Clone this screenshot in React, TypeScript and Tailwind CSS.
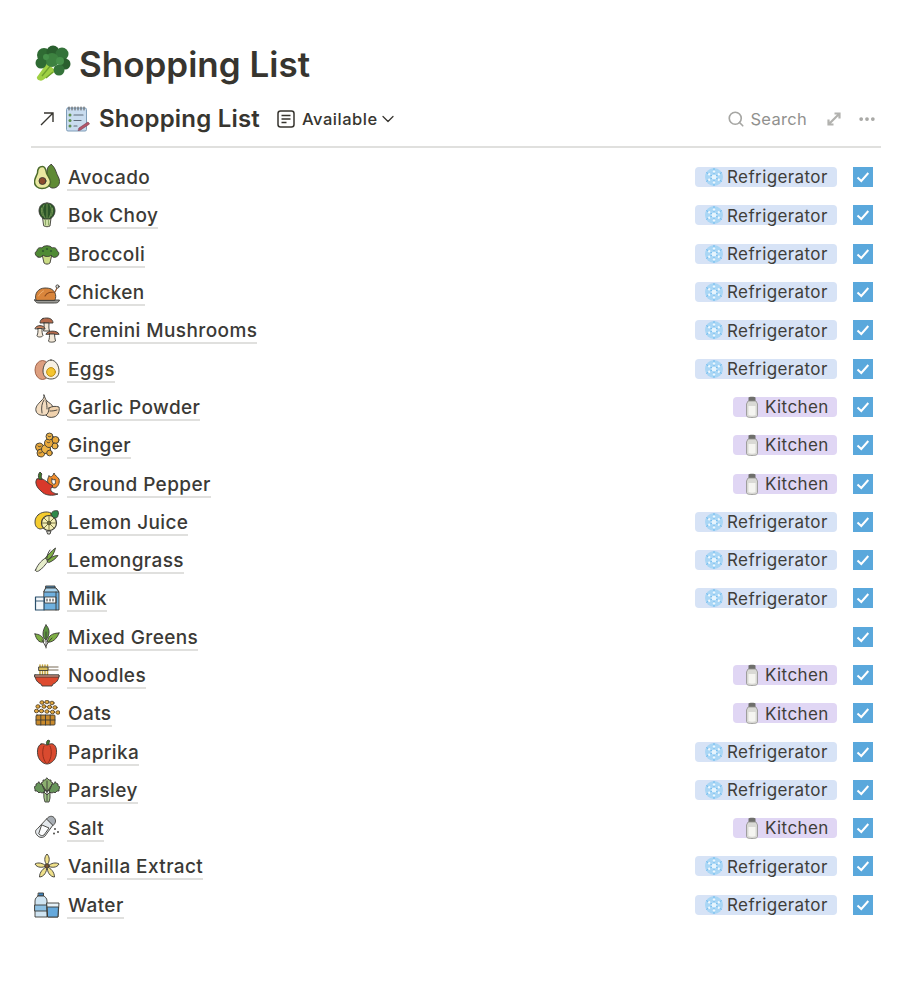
import type { ReactNode } from "react"
import { ChevronDown, Search, MoreHorizontal } from "lucide-react"

const ink = "#3b3a36"

function Ico({ children, size = 26 }: { children: ReactNode; size?: number }) {
  return (
    <svg
      width={size}
      height={size}
      viewBox="0 0 26 26"
      fill="none"
      stroke={ink}
      strokeWidth="0.9"
      strokeLinejoin="round"
      strokeLinecap="round"
      className="shrink-0"
    >
      {children}
    </svg>
  )
}

const Avocado = () => (
  <Ico>
    <path d="M17 0.500c-2 1-4 3-4 7 0 5 0 16 5 16.500 4 .5 7.500-2 7.500-6.500 0-4-2.500-6-3.500-10-1-3-3-6-5-7.500z" fill="#5f8a35" />
    <path d="M8.500 2.500c-3.500 0-5 3-5 6.500-1 3-3 5.500-3 9 0 4 3.500 6.500 7.500 6.500 4.500 0 8.500-2.500 8.500-6.500 0-3.500-3-6-4-9-.5-3-1.500-6.500-4-6.500z" fill="#e9e8a0" stroke="#4c6b2c" strokeWidth="1.500" />
    <circle cx="8.500" cy="17" r="3.500" fill="#8a4b2d" />
  </Ico>
)
const BokChoy = () => (
  <Ico>
    <path d="M9 16h8l-1 8c-2 1-4 1-6 0z" fill="#cfe0a8" />
    <path d="M13 1c5 0 8 3 8 8 0 4-3 7-5 8h-6c-2-1-5-4-5-8 0-5 3-8 8-8z" fill="#2b5528" />
    <path d="M13 2v14M10 3c-2 3-2 8 1 13M16 3c2 3 2 8-1 13M7.500 6c-.5 3 0 6 1.500 8M18.500 6c.5 3 0 6-1.500 8" stroke="#8fb066" strokeWidth=".7" />
    <path d="M11.500 18v5M14.500 18v5" stroke="#6f8f4a" strokeWidth=".7" />
  </Ico>
)
const BroccoliSmall = () => (
  <Ico>
    <path d="M8 13l2 9c2 1.500 4 1.500 6 0l2-9z" fill="#cbdc85" />
    <path d="M4 16c-3-1-4-5-1-6 0-3 3-4 5-3 1-3 9-3 10 0 2-1 5 0 5 3 3 1 2 5-1 6-2 1-4 0-5-2-1 2-6 2-8 0-1 2-3 3-5 2z" fill="#4f8a34" />
    <circle cx="9" cy="10" r="1.100" fill="#2f5a2c" stroke="none" />
    <circle cx="17" cy="10" r="1.100" fill="#2f5a2c" stroke="none" />
    <circle cx="13" cy="8" r="1.100" fill="#2f5a2c" stroke="none" />
  </Ico>
)
const Chicken = () => (
  <Ico>
    <path d="M0.500 21h25c-1 3-3 3-5 3H6c-3 0-4 0-5.500-3z" fill="#9a9a96" />
    <path d="M2 21c-2-6 2-12 9-12 5 0 8 1 10 5 1 2 1 5 0 7z" fill="#d9853b" />
    <path d="M11 17c2-4 6-4 10-4l2-4" stroke="#8a4a1e" strokeWidth="1.100" fill="none" />
    <circle cx="23.500" cy="7.500" r="1.600" fill="#d8d8d4" />
    <path d="M4.500 17c1-2 3-4 5-5" stroke="#f2b87a" fill="none" />
  </Ico>
)
const Mushrooms = () => (
  <Ico>
    <path d="M9 1.500c5-1.500 10 0 10 4.500H6c0-2 1-4 3-4.500z" fill="#b5694a" />
    <path d="M10 6h5c0 3-.5 5 .5 8h-6c1-3 .5-5 .5-8z" fill="#f3e8d8" />
    <path d="M1 11.500c1-4 9-4 10 0z" fill="#c67f5b" />
    <path d="M4 11.500h4c0 3 0 5 1 7-1 2-6 2-6 0 1-2 1-4 1-7z" fill="#f3e8d8" />
    <path d="M12 17c1-4 12-4 13 0z" fill="#b5694a" />
    <path d="M15.500 17h5c0 2 .5 5 1 7-1 1.500-7 1.500-7 0 1-2 1-5 1-7z" fill="#f3e8d8" />
  </Ico>
)
const Eggs = () => (
  <Ico>
    <ellipse cx="8.500" cy="14" rx="7.500" ry="9.500" fill="#dd9f7f" stroke="#96583e" />
    <path d="M17 4c5 0 8 6 8 11s-3 8-8 8-8-3-8-8 3-11 8-11z" fill="#f7f1e3" />
    <circle cx="17" cy="16" r="4.400" fill="#f5c52f" stroke="#b8860b" />
  </Ico>
)
const Garlic = () => (
  <Ico>
    <path d="M10 1c.5 3-1 4-3 6-3 3-6 6-5 10 1 4 6 5 10 4 5-1 8-4 7-8-1-3-4-4-6-6-2-2-2-4-3-6z" fill="#f3dcc0" />
    <path d="M15 14c3-2 7-2 10-1 1 4-1 9-5 10-4 1-7 0-8-2 2-1 3-4 3-7z" fill="#f0d2ae" />
    <path d="M10 6c-2 3-3 7-2 13M12 7c1 3 1 6 1 8M16 17c2 0 4 0 7-1" />
  </Ico>
)
const Ginger = () => (
  <Ico>
    <circle cx="5.500" cy="15" r="4" fill="#e9a83a" />
    <circle cx="7" cy="21" r="4" fill="#e9a83a" />
    <circle cx="12" cy="17" r="4.500" fill="#eeb347" />
    <circle cx="15" cy="11" r="4.500" fill="#e9a83a" />
    <circle cx="15.500" cy="4.500" r="3.500" fill="#eeb347" />
    <circle cx="21.500" cy="8" r="3.500" fill="#e9a83a" />
    <circle cx="21" cy="14" r="3" fill="#eeb347" />
    <circle cx="15.500" cy="21" r="2.800" fill="#e9a83a" />
    <path d="M4 14c1 1 2 1 3 0M5 21c1 0 2 0 3-1M13 10c1 1 2 1 3 0M14 4c1 1 2 1 3 0" />
  </Ico>
)
const Pepper = () => (
  <Ico>
    <path d="M15 5c2 2 4 0 5-3 1 3 3 3 5 6 1 4-1 8-4 9-3 0-6-2-7-5-1-3 0-5 1-7z" fill="#ef8c2c" />
    <path d="M18 8c1 1 2 1 3 0 0 2 1 3 0 5-2 1-4-1-3-5z" fill="#fff" />
    <path d="M3 8c3-1 7 0 10 3 2 2 5 3 6 4-1 1-3 2-2 5 1 1 4 3 7 3-5 2-13 2-17-3C3 17 0 11 3 8z" fill="#d9392b" />
    <path d="M5 8C4 6 4 3 6 1l2 2c-1 1-1 3 0 5z" fill="#3f7a2c" />
  </Ico>
)
const Lemon = () => (
  <Ico>
    <path d="M4 6c3-3 9-4 13-2 2 2 1 6-2 10-3 3-6 6-9 6-4-1-5-4-5-7 0-3 1-5 3-7z" fill="#f5cc2e" />
    <circle cx="15" cy="14" r="7.500" fill="#f4eeb5" stroke="#3b3a36" strokeWidth="1.200" />
    <circle cx="15" cy="14" r="1.800" fill="#8d8a45" />
    <path d="M15 7v14M8 14h14M10 9l10 10M20 9L10 19" stroke="#6d6a35" />
    <path d="M17 5c1-3 4-4 7-3 0 1 1 3 0 4 0 2-1 3-3 3-2 0-3-2-4-4z" fill="#2f8a4a" />
    <path d="M13 22h4l-1 3h-2z" fill="#d7d7cf" />
  </Ico>
)
const Lemongrass = () => (
  <Ico>
    <path d="M1.500 23c3-7 7-10 10-12l3 3c-3 3-6 8-10 10-2 1-3.500 0-3 -1z" fill="#e7eecb" />
    <path d="M11.500 11c2-3 6-7 10-10-1 4-3 9-7 12zM13 13.500c3-3 7-5 11-5-2 3-6 6-9 7z" fill="#7eae45" />
    <path d="M13 11c0-3 1-5 3-8" fill="none" />
  </Ico>
)
const Milk = () => (
  <Ico>
    <path d="M10 7l2-4h10l3 4v18H10z" fill="#6fb0de" />
    <path d="M12 1h9v2h-9z" fill="#4f8fc0" />
    <path d="M12 3h10l3 4H10z" fill="#a9d4ef" />
    <rect x="11" y="12" width="11" height="6" fill="#fff" />
    <path d="M13 14v2M16 14v2M19 14v2" strokeWidth="1.100" />
    <path d="M22 7v18" />
    <path d="M1.500 12h8.500v13H1.500z" fill="#f3f7fa" stroke="#2a4f6b" strokeWidth="1.200" />
    <path d="M1.500 16h8.500" stroke="#2a4f6b" />
  </Ico>
)
const Greens = () => (
  <Ico>
    <path d="M12 1c3 3 4 7 2 12-1 2-2 3-2 3-2-1-3-3-3-6 0-3 1-6 3-9z" fill="#5d9440" />
    <path d="M1 10c4 0 8 2 9 7 0 .5 0 1-1 1-4 1-7-3-8-8z" fill="#7eae45" />
    <path d="M25 9c-4 0-9 1-11 6l-1 3c5 1 10-3 12-9z" fill="#7eae45" />
    <path d="M12 24c0-7 0-11 0-16M12 23c-1-2-3-5-4-7M12 22c1-2 3-5 6-8" />
  </Ico>
)
const Noodles = () => (
  <Ico>
    <path d="M6 3v11M8.500 3v11M11 3v11M13.500 3v11" stroke="#c0a03a" strokeWidth="1.500" />
    <path d="M13 5h11M13 8h11" stroke="#a59c8e" strokeWidth="1.400" />
    <path d="M5 5h9v3.500H5z" fill="#d8bc5a" />
    <path d="M1 13h24c0 5-3 8-6 9l-1 2H8l-1-2c-3-1-6-4-6-9z" fill="#dd4a2f" />
    <path d="M1 13h24v2H1z" fill="#f4a48e" />
  </Ico>
)
const Oats = () => (
  <Ico>
    {[[8, 2.500], [13, 2], [18, 3], [4, 6.500], [10, 6.500], [15.500, 7], [21, 7.500], [2.500, 11], [7.500, 11], [13, 11.500], [18.500, 12], [24, 12.500]].map(([x, y]) => (
      <ellipse key={`${x}-${y}`} cx={x} cy={y} rx="2.100" ry="1.800" fill="#e4a93f" stroke="#4a3a20" strokeWidth=".8" />
    ))}
    <rect x="2" y="15" width="19" height="10" rx="1" fill="#c98a2c" />
    <path d="M6.800 15v10M11.500 15v10M16.200 15v10M2 20h19" />
  </Ico>
)
const Paprika = () => (
  <Ico>
    <path d="M13 6c-1-2-1-3 1-5l2 1c-1 1-1 2-1 4z" fill="#3f7a2c" />
    <path d="M7 5c3-1 4 1 6 1s3-2 6-1c4 2 4 8 3 12-1 4-5 8-9 8s-8-4-9-8C3 13 3 7 7 5z" fill="#d94a2f" />
    <path d="M10 7c-2 4-2 12 2 17M16 7c2 4 2 12-2 17" stroke="#8e2a18" />
  </Ico>
)
const Parsley = () => (
  <Ico>
    <path d="M13 1l2 2 2 0 0 2 2 1-1 2 1 2-2 1-1 2-3 1-3-1-1-2-2-1 1-2-1-2 2-1 0-2 2 0z" fill="#8cb070" />
    <path d="M5 5l1 2 2 0 1 3 1 2 1 3-3 1-2-1-1 1-2-2-2 0 0-2-1-2 2-1 0-2 2-1z" fill="#67955a" />
    <path d="M21 5l-1 2-2 0-1 3-1 2-1 3 3 1 2-1 1 1 2-2 2 0 0-2 1-2-2-1 0-2-2-1z" fill="#67955a" />
    <path d="M10 15l3 3 3-3v6l-1 4h-4l-1-4z" fill="#a4c78a" />
    <path d="M13 4v20M9 9l4 6M17 9l-4 6" />
  </Ico>
)
const Salt = () => (
  <Ico>
    <path d="M13 4l6 6-8 11c-2 2-6 2-8-1-2-2-2-5 0-6z" fill="#e3e8ec" />
    <path d="M8 10l7 3-5 7c-2 1-3 1-5-1z" fill="#fbfcfd" />
    <path d="M13 3.500c2-2.500 5-3 7-1s2 5 0 7l-1 1-6-6z" fill="#a8aeb4" />
    <circle cx="21" cy="14" r=".9" fill="#3b3a36" stroke="none" />
    <circle cx="24" cy="17" r=".9" fill="#3b3a36" stroke="none" />
    <circle cx="20" cy="18.500" r=".9" fill="#3b3a36" stroke="none" />
  </Ico>
)
const Vanilla = () => (
  <Ico>
    <path d="M13 12c-3-3-3-8 0-11 3 3 3 8 0 11z" fill="#efe08a" />
    <path d="M12 13c-3-3-8-4-11-2 2 4 8 4 11 2z" fill="#efe08a" />
    <path d="M14 13c3-3 8-4 11-2-2 4-8 4-11 2z" fill="#efe08a" />
    <path d="M12.500 14c-3 1-7 5-7 10 4 0 8-5 7-10z" fill="#efe08a" />
    <path d="M13.500 14c3 1 7 5 7 10-4 0-8-5-7-10z" fill="#efe08a" />
    <circle cx="13" cy="13" r="2.200" fill="#7a5530" />
  </Ico>
)
const Water = () => (
  <Ico>
    <path d="M4.500 1h5v3h-5z" fill="#3f84bd" />
    <path d="M4 4h6c1 1 3 2 3 5v16H1V9c0-3 2-4 3-5z" fill="#cfe4f2" />
    <path d="M1 13h12v6H1z" fill="#8dc0e3" />
    <path d="M13 11h12l-1 14H14z" fill="#e5f1f8" />
    <path d="M13.500 15h11l-.6 10H14z" fill="#66a9dc" />
  </Ico>
)

const Notepad = () => (
  <svg width="26" height="26" viewBox="0 0 26 26" className="shrink-0" strokeLinecap="round">
    <rect x="1.500" y="2" width="20" height="23" rx="1.500" fill="#c9dcef" stroke="#7f9db8" />
    <path d="M4 1v3M7 1v3M10 1v3M13 1v3M16 1v3M19 1v3" stroke="#555" strokeWidth="1" />
    <circle cx="5" cy="9" r="1.500" fill="#5e8f4f" />
    <circle cx="5" cy="14.500" r="1.500" fill="#5e8f4f" />
    <circle cx="5" cy="20" r="1.500" fill="#5e8f4f" />
    <path d="M9 9h9M9 14.500h7M9 20h3" stroke="#5f6a78" strokeWidth="1.200" />
    <path d="M14 22l9-6 1.500 2-9 6-2 .5z" fill="#b4566a" stroke="#7a3346" strokeWidth=".6" />
  </svg>
)

const BigBroccoli = () => (
  <svg width="38" height="38" viewBox="0 0 38 38" className="shrink-0">
    <path d="M4 32l10-14 9 8-13 9c-3 2-7-1-6-3z" fill="#9fd043" />
    <path d="M9 31l9-11M13 33l7-6" stroke="#6fa12e" strokeWidth="1.300" />
    <circle cx="11" cy="10" r="7" fill="#2f6b33" />
    <circle cx="20" cy="7" r="6.500" fill="#2a5f2e" />
    <circle cx="29" cy="9" r="6.500" fill="#34733a" />
    <circle cx="32" cy="19" r="5.500" fill="#2a5f2e" />
    <circle cx="26" cy="25" r="5.500" fill="#34733a" />
    <circle cx="19" cy="15" r="7" fill="#3d8240" />
    <circle cx="8" cy="18" r="5.500" fill="#2f6b33" />
    <circle cx="27" cy="16" r="4" fill="#46904a" />
    <circle cx="13" cy="12" r="3" fill="#46904a" />
  </svg>
)

const Snowflake = () => (
  <svg width="20" height="20" viewBox="0 0 20 20" className="shrink-0">
    <circle cx="10" cy="10" r="9" fill="#a9d6f5" />
    <g stroke="#6db9ee" strokeWidth="1" strokeLinecap="round">
      <path d="M10 1.500v17M2.600 5.700l14.800 8.600M2.600 14.300l14.800-8.600" />
    </g>
    <circle cx="10" cy="10" r="2.500" fill="#e6f4fd" />
    <circle cx="10" cy="4.500" r="1.200" fill="#eef8fe" />
    <circle cx="10" cy="15.500" r="1.200" fill="#eef8fe" />
    <circle cx="5.200" cy="7.200" r="1.200" fill="#eef8fe" />
    <circle cx="14.800" cy="7.200" r="1.200" fill="#eef8fe" />
    <circle cx="5.200" cy="12.800" r="1.200" fill="#eef8fe" />
    <circle cx="14.800" cy="12.800" r="1.200" fill="#eef8fe" />
  </svg>
)

const Shaker = () => (
  <svg width="20" height="22" viewBox="0 0 20 22" className="shrink-0">
    <path d="M6.500 1.500c0-1 7-1 7 0V5h-7z" fill="#6f6f6c" />
    <path d="M6 5h8l1.500 3v11c0 2-1.500 2.500-5.500 2.500S4.500 21 4.500 19V8z" fill="#d9d9d5" stroke="#8f8f8b" strokeWidth=".8" />
    <path d="M6.500 10h7v9c-2 1-5 1-7 0z" fill="#f5f5f1" />
  </svg>
)

const Badge = ({ kind }: { kind: "fridge" | "kitchen" }) =>
  kind === "fridge" ? (
    <span className="flex h-5 w-[142px] items-center rounded bg-[#d7e3f6] pl-[9px] text-[17px] tracking-[0.4px] text-[#3f3e3a]">
      <Snowflake />
      <span className="ml-[3px] pt-0.5">Refrigerator</span>
    </span>
  ) : (
    <span className="flex h-5 w-[104px] items-center rounded bg-[#e0d6f4] pl-[9px] text-[17px] tracking-[0.4px] text-[#3f3e3a]">
      <Shaker />
      <span className="ml-[3px] pt-0.5">Kitchen</span>
    </span>
  )

const Check = () => (
  <span className="ml-4 mr-2 flex size-5 shrink-0 items-center justify-center bg-[#5aa8dc]">
    <svg width="14" height="14" viewBox="0 0 14 14" fill="none">
      <path d="M1.500 7.500l3.800 3.500 7-8" stroke="white" strokeWidth="2" />
    </svg>
  </span>
)

const items: { name: string; icon: () => ReactNode; place?: "fridge" | "kitchen" }[] = [
  { name: "Avocado", icon: Avocado, place: "fridge" },
  { name: "Bok Choy", icon: BokChoy, place: "fridge" },
  { name: "Broccoli", icon: BroccoliSmall, place: "fridge" },
  { name: "Chicken", icon: Chicken, place: "fridge" },
  { name: "Cremini Mushrooms", icon: Mushrooms, place: "fridge" },
  { name: "Eggs", icon: Eggs, place: "fridge" },
  { name: "Garlic Powder", icon: Garlic, place: "kitchen" },
  { name: "Ginger", icon: Ginger, place: "kitchen" },
  { name: "Ground Pepper", icon: Pepper, place: "kitchen" },
  { name: "Lemon Juice", icon: Lemon, place: "fridge" },
  { name: "Lemongrass", icon: Lemongrass, place: "fridge" },
  { name: "Milk", icon: Milk, place: "fridge" },
  { name: "Mixed Greens", icon: Greens },
  { name: "Noodles", icon: Noodles, place: "kitchen" },
  { name: "Oats", icon: Oats, place: "kitchen" },
  { name: "Paprika", icon: Paprika, place: "fridge" },
  { name: "Parsley", icon: Parsley, place: "fridge" },
  { name: "Salt", icon: Salt, place: "kitchen" },
  { name: "Vanilla Extract", icon: Vanilla, place: "fridge" },
  { name: "Water", icon: Water, place: "fridge" },
]

export default function App() {
  return (
    <main className="min-h-[1000px] bg-white pl-[31px] pr-[34px] pt-[42px] font-['Inter',sans-serif] text-[#37352f]">
      <h1 className="flex h-[44px] items-center gap-2 pl-[2px] text-[35px] font-semibold leading-none">
        <BigBroccoli />
        Shopping List
      </h1>

      {/* view header */}
      <div className="mt-[10px] flex h-[52px] items-center border-b-2 border-[#e0e0de] pb-1">
        <svg width="16" height="16" viewBox="0 0 16 16" fill="none" stroke="#37352f" strokeWidth="1.400" className="ml-2">
          <path d="M2 14L14 2M5 2h9v9" />
        </svg>
        <span className="ml-[10px]"><Notepad /></span>
        <span className="ml-2 text-[24px] font-semibold tracking-[0.2px]">Shopping List</span>
        <svg width="18" height="18" viewBox="0 0 18 18" fill="none" stroke="#37352f" strokeWidth="1.500" className="ml-[17px]">
          <rect x="1" y="1" width="16" height="16" rx="2.500" />
          <path d="M4.500 5.500h9M4.500 9h9M4.500 12.500h5" />
        </svg>
        <span className="ml-[7px] text-[16.5px] font-medium tracking-[0.5px]">Available</span>
        <ChevronDown size={20} strokeWidth={1.500} />
        <Search size={18} strokeWidth={2.200} className="ml-auto text-[#a6a6a3]" />
        <span className="ml-[5px] text-[16.5px] tracking-[0.3px] text-[#91918e]">Search</span>
        <svg width="14" height="14" viewBox="0 0 14 14" fill="none" stroke="#b2b2af" strokeWidth="2.200" className="ml-[20px]">
          <path d="M1.500 12.500l11-11M7.500 1.500h5v5M1.500 7.500v5h5" />
        </svg>
        <MoreHorizontal size={20} strokeWidth={2.500} className="ml-[16px] mr-1 text-[#a6a6a3]" />
      </div>

      <ul className="mt-[10px]">
        {items.map((item) => (
          <li key={item.name} className="flex h-[38.3px] items-center">
            <span className="ml-[3px] flex w-[33px]">
              <item.icon />
            </span>
            <span className="border-b-2 border-[#e0e0de] pl-px pt-1 text-[19px] font-medium leading-[22px] tracking-[0.4px] text-[#3b3a36]">
              {item.name}
            </span>
            <span className="ml-auto">{item.place && <Badge kind={item.place} />}</span>
            <Check />
          </li>
        ))}
      </ul>
    </main>
  )
}
